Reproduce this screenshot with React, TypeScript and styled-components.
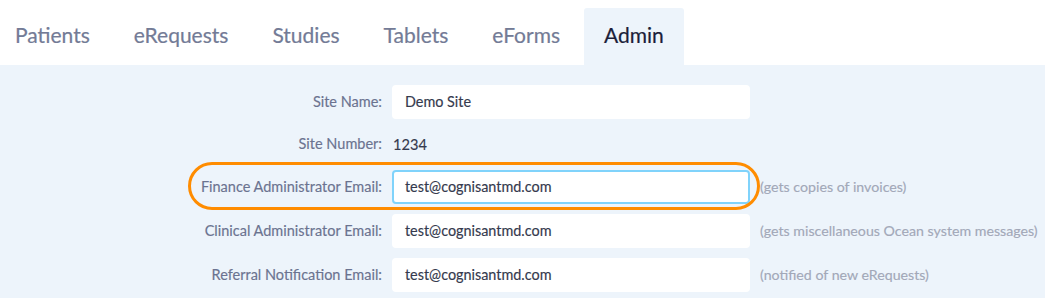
import React from 'react';
import styled, { createGlobalStyle, css } from 'styled-components';

const GlobalStyle = createGlobalStyle`
  html, body {
    margin: 0;
    padding: 0;
    background: #ffffff;
    font-family: Lato, "Open Sans", "Liberation Sans", sans-serif;
  }
`;

const Page = styled.div`
  width: 1045px;
  height: 298px;
  overflow: hidden;
  display: flex;
  flex-direction: column;
`;

const TabBar = styled.nav`
  display: flex;
  align-items: flex-end;
  gap: 4px;
  height: 65px;
  padding-left: 15px;
  background: #ffffff;
  box-sizing: border-box;
`;

const Tab = styled.div<{ $active?: boolean }>`
  height: 57px;
  display: flex;
  align-items: center;
  padding: 0 20px 5px;
  box-sizing: border-box;
  font-size: 21px;
  color: #737b96;
  border-radius: 3px 3px 0 0;
  -webkit-text-stroke: 0.2px currentColor;

  &:first-child {
    padding-left: 0;
  }

  ${({ $active }) =>
    $active &&
    css`
      background: #edf4fb;
      color: #1b1e3a;
    `}
`;

const Panel = styled.div`
  flex: 1;
  background: #edf4fb;
  padding-top: 20px;
  display: flex;
  flex-direction: column;
  gap: 10px;
`;

const Row = styled.div<{ $height?: number }>`
  position: relative;
  display: grid;
  grid-template-columns: 382px 358px auto;
  column-gap: 10px;
  align-items: center;
  height: ${({ $height }) => $height ?? 34}px;
`;

const Label = styled.div`
  text-align: right;
  font-size: 14.5px;
  color: #6b7390;
  padding-bottom: 2px;
  -webkit-text-stroke: 0.15px currentColor;
`;

const Field = styled.div<{ $focused?: boolean }>`
  height: 34px;
  box-sizing: border-box;
  background: #ffffff;
  border-radius: 4px;
  display: flex;
  align-items: center;
  padding: 0 11px 2px;
  font-size: 14.4px;
  color: #353a4e;
  border: 2px solid ${({ $focused }) => ($focused ? '#80d3fb' : '#ffffff')};
  -webkit-text-stroke: 0.15px currentColor;
`;

const Value = styled.div`
  font-size: 14.6px;
  color: #353a4e;
  padding-left: 1px;
  -webkit-text-stroke: 0.15px currentColor;
`;

const Hint = styled.div`
  font-size: 14.2px;
  color: #a2a8b8;
  white-space: nowrap;
  padding-bottom: 2px;
  -webkit-text-stroke: 0.15px currentColor;
`;

const Highlight = styled.div`
  position: absolute;
  left: 188px;
  width: 572px;
  top: -8px;
  height: 48px;
  box-sizing: border-box;
  border: 3px solid #ff8c00;
  border-radius: 25px;
  pointer-events: none;
`;

const tabs = ['Patients', 'eRequests', 'Studies', 'Tablets', 'eForms', 'Admin'];

const emails = [
  { label: 'Finance Administrator Email:', hint: '(gets copies of invoices)', focused: true },
  { label: 'Clinical Administrator Email:', hint: '(gets miscellaneous Ocean system messages)' },
  { label: 'Referral Notification Email:', hint: '(notified of new eRequests)' },
];

const App: React.FC = () => (
  <>
    <GlobalStyle />
    <Page>
      <TabBar>
        {tabs.map((t) => (
          <Tab key={t} $active={t === 'Admin'}>
            {t}
          </Tab>
        ))}
      </TabBar>
      <Panel>
        <Row>
          <Label>Site Name:</Label>
          <Field>Demo Site</Field>
        </Row>
        <Row $height={31}>
          <Label>Site Number:</Label>
          <Value>1234</Value>
        </Row>
        {emails.map((e) => (
          <Row key={e.label}>
            {e.focused && <Highlight />}
            <Label>{e.label}</Label>
            <Field $focused={e.focused}>test@cognisantmd.com</Field>
            <Hint>{e.hint}</Hint>
          </Row>
        ))}
      </Panel>
    </Page>
  </>
);

export default App;
